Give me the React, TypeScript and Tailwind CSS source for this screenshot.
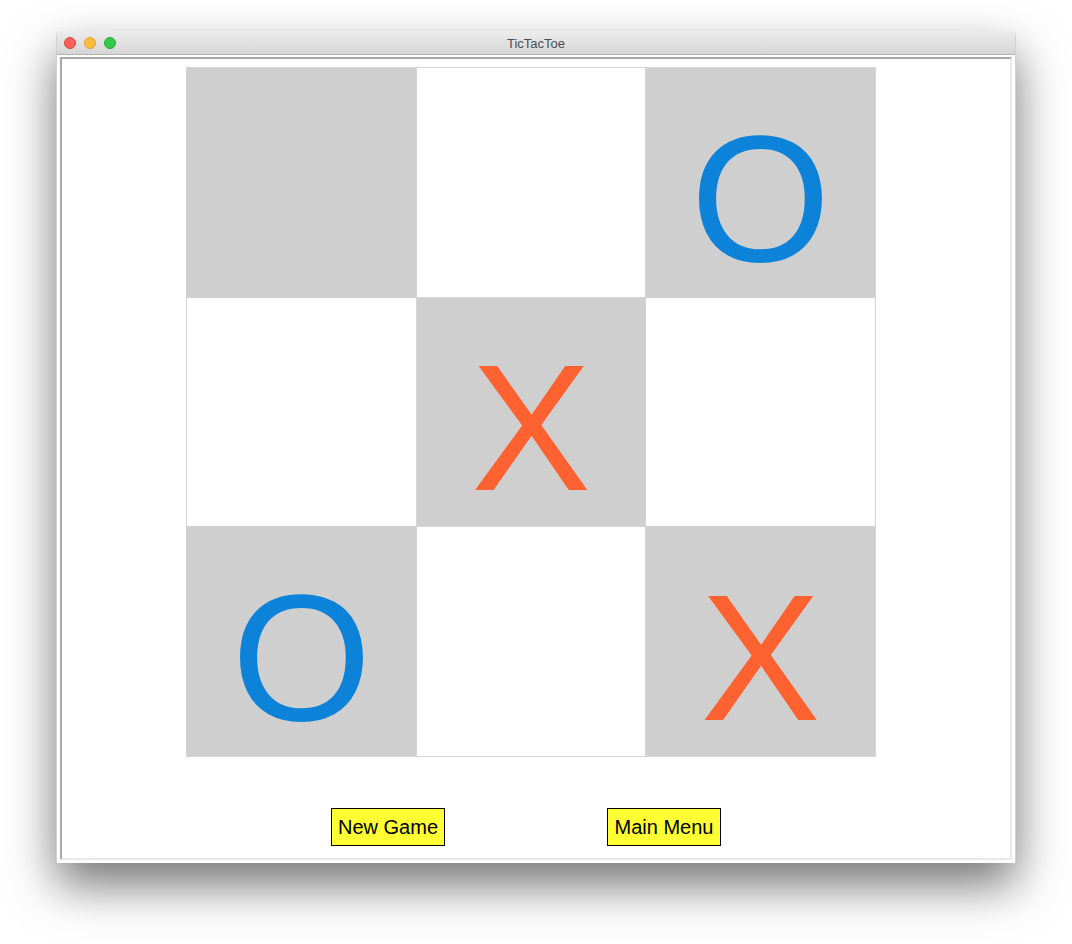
import React from "react";

type Mark = "X" | "O" | "";

const board: Mark[] = ["", "", "O", "", "X", "", "O", "", "X"];

function Cell({ mark, gray }: { mark: Mark; gray: boolean }) {
  return (
    <div
      className={`flex items-center justify-center pt-[32px] leading-none text-[180px] ${
        gray ? "bg-[#cfcfcf]" : "bg-white"
      } ${mark === "X" ? "text-[#ff6231]" : "text-[#0c82d9]"}`}
    >
      {mark}
    </div>
  );
}

export default function App() {
  return (
    <div
      className="min-h-[944px] w-[1072px] bg-white pt-[31px] pl-[56px]"
      style={{ fontFamily: '"Liberation Sans", Arial, sans-serif' }}
    >
      <div className="w-[960px] rounded-t-[5px] overflow-hidden bg-white shadow-[0_22px_48px_rgba(0,0,0,0.55)] border-x border-[#d0d0d0]">
        {/* title bar */}
        <div className="relative h-[24px] flex items-center bg-gradient-to-b from-[#ececec] to-[#d6d6d6] border-b border-[#b4b4b4]">
          <div className="flex items-center gap-[8px] pl-[7px] pt-[1px]">
            <span className="w-[12px] h-[12px] rounded-full bg-[#fc605c] border border-[#e0443e]" />
            <span className="w-[12px] h-[12px] rounded-full bg-[#fdbc40] border border-[#dea236]" />
            <span className="w-[12px] h-[12px] rounded-full bg-[#34c84a] border border-[#27aa35]" />
          </div>
          <div className="absolute inset-0 flex items-center justify-center pt-[2px] text-[13px] text-[#4d4d4d]">
            TicTacToe
          </div>
        </div>
        {/* body */}
        <div className="pt-[2px] pb-[3px] pl-[3px] pr-[3px]">
          <div className="border-t-2 border-l-2 border-[#a8a8a8] border-r-2 border-b-2 border-r-[#e9e9e9] border-b-[#e9e9e9] bg-white pt-[8px] pb-[12px]">
            <div className="ml-[124px] w-[690px] grid grid-cols-[229px_228px_229px] grid-rows-[229px_228px_229px] gap-px p-px bg-[#d4d4d4]">
              {board.map((m, i) => (
                <Cell key={i} mark={m} gray={i % 2 === 0} />
              ))}
            </div>
            <div className="mt-[51px] flex items-center">
              <button className="ml-[269px] w-[114px] h-[38px] bg-[#ffff33] border border-black text-[20px] text-black flex items-center justify-center">
                New Game
              </button>
              <button className="ml-[162px] w-[114px] h-[38px] bg-[#ffff33] border border-black text-[20px] text-black flex items-center justify-center">
                Main Menu
              </button>
            </div>
          </div>
        </div>
      </div>
    </div>
  );
}
